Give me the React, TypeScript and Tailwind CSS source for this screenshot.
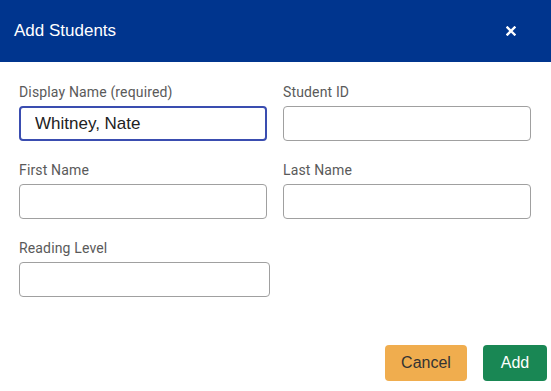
import React from "react";

type fieldProps = {
  label: string;
  value?: string;
  focused?: boolean;
  width?: string;
};

function Field({ label, value, focused, width }: fieldProps) {
  return (
    <div className="flex flex-col">
      <label className="h-5 leading-5 text-[14px] tracking-[0.15px] text-[#5a5a5a] font-['Roboto',sans-serif] mb-[4px]">
        {label}
      </label>
      <input
        readOnly
        value={value ?? ""}
        className={`h-[35px] ${width ?? "w-[248px]"} rounded-[4px] bg-white px-[14px] text-[17px] text-[#222] font-['Liberation_Sans',Arial,sans-serif] outline-none ${
          focused ? "border-2 border-[#3a4db0]" : "border border-[#a0a0a0]"
        }`}
      />
    </div>
  );
}

export default function App() {
  return (
    <div className="w-[551px] h-[391px] bg-white overflow-hidden flex flex-col font-['Liberation_Sans',Arial,sans-serif]">
      <div className="h-[62px] bg-[#00358e] flex items-center justify-between pl-[14px] pr-[35px] shrink-0">
        <h4 className="text-white text-[17px]">Add Students</h4>
        <svg width="10" height="10" viewBox="0 0 10 10">
          <path d="M1.5 1.5 L8.5 8.5 M8.5 1.5 L1.5 8.5" stroke="white" strokeWidth="2.4" strokeLinecap="square" />
        </svg>
      </div>
      <div className="pl-[19px] pt-[20px]">
        <div className="grid grid-cols-[248px_248px] gap-x-4 gap-y-[19px]">
          <Field label="Display Name (required)" value="Whitney, Nate" focused />
          <Field label="Student ID" />
          <Field label="First Name" />
          <Field label="Last Name" />
          <Field label="Reading Level" width="w-[251px]" />
        </div>
      </div>
      <div className="flex justify-end gap-4 pr-1 mt-[48px]">
        <button className="h-9 w-[82px] rounded-[4px] bg-[#f0ad4e] text-[#333] text-[16px]">
          Cancel
        </button>
        <button className="h-9 w-16 rounded-[4px] bg-[#198754] text-white text-[16px]">
          Add
        </button>
      </div>
    </div>
  );
}
